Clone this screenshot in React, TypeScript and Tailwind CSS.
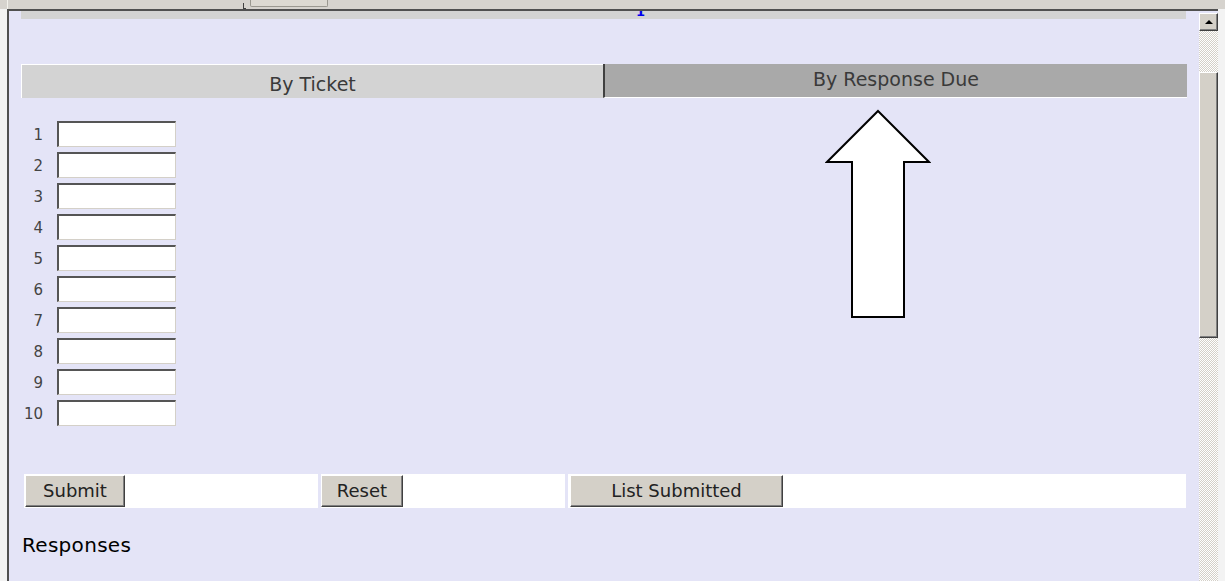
const rows = [1, 2, 3, 4, 5, 6, 7, 8, 9, 10];

function ClassicButton({ label, width }: { label: string; width: string }) {
  return (
    <button
      type="button"
      className={`${width} h-[32px] bg-[#d4d0c8] border border-t-white border-l-white border-r-[#404040] border-b-[#404040] shadow-[inset_-1px_-1px_0_#808080] text-[18px] leading-[22px] text-[#222] font-['DejaVu_Sans',sans-serif]`}
    >
      {label}
    </button>
  );
}

function UpArrowAnnotation() {
  return (
    <svg
      className="absolute left-[825px] top-[109px]"
      width="106"
      height="211"
      viewBox="0 0 106 211"
    >
      <polygon
        points="53,2 104,53 79,53 79,208 27,208 27,53 2,53"
        fill="#ffffff"
        stroke="#000000"
        strokeWidth="2"
        strokeLinejoin="miter"
      />
    </svg>
  );
}

function Scrollbar() {
  return (
    <div className="w-[19px] flex flex-col bg-[repeating-conic-gradient(#d4d0c8_0_25%,#ffffff_0_50%)] bg-[length:2px_2px]">
      <div className="h-[2px] bg-[#e4e4f7]" />
      <div className="h-[18px] bg-[#d4d0c8] border border-t-white border-l-white border-r-[#404040] border-b-[#404040] shadow-[inset_-1px_-1px_0_#808080] flex items-center justify-center">
        <div className="w-0 h-0 border-l-[4px] border-r-[4px] border-b-[4px] border-l-transparent border-r-transparent border-b-black" />
      </div>
      <div className="h-[41px]" />
      <div className="h-[266px] bg-[#d4d0c8] border border-t-white border-l-white border-r-[#404040] border-b-[#404040] shadow-[inset_-1px_-1px_0_#808080]" />
      <div className="flex-1" />
    </div>
  );
}

export default function App() {
  return (
    <div className="relative w-[1225px] h-[581px] overflow-hidden bg-[#f3f3f3] font-['DejaVu_Sans',sans-serif]">
      {/* browser toolbar strip */}
      <div className="h-[9px] bg-[#d6d3ce] flex">
        <div className="ml-[7px] w-px h-full bg-[#f2f1ec]" />
        <div className="ml-[235px] mt-[3px] w-[3px] h-[6px] border-l border-b border-[#404040]" />
        <div className="ml-[4px] w-[78px] h-[7px] border-l border-r border-b border-[#9a9890] rounded-b-[2px] bg-[#dcd9d2]" />
      </div>

      {/* framed page */}
      <div className="ml-[7px] w-[1211px] h-[572px] border-t-2 border-l-2 border-[#505050] flex">
        <div className="flex-1 bg-[#e4e4f7] flex flex-col">
          {/* pager strip */}
          <div className="ml-[12px] w-[1165px] h-[8px] bg-[#d3d3d3] overflow-hidden">
            <div className="ml-[615px] -mt-[7px] text-[13px] leading-[15px] font-bold text-[#0000ee]">1</div>
          </div>

          {/* view tabs */}
          <div className="mt-[45px] ml-[12px] w-[1166px] h-[34px] flex">
            <div className="w-[582px] bg-[#d3d3d3] border-t border-l border-white text-center pt-[8px] text-[19px] leading-[22px] text-[#3a3a3a]">
              By Ticket
            </div>
            <div className="flex-1 bg-[#a9a9a9] border-l-2 border-l-[#404040] border-b border-b-white text-center pt-[4px] text-[19px] leading-[22px] text-[#3a3a3a]">
              By Response Due
            </div>
          </div>

          {/* ticket number entries */}
          <div className="mt-[23px] flex flex-col gap-[5px]">
            {rows.map((n) => (
              <div key={n} className="flex items-center h-[26px]">
                <span className="w-[34px] text-right text-[15px] leading-[18px] text-[#444] pt-[2px]">{n}</span>
                <input
                  type="text"
                  className="ml-[14px] w-[119px] h-[26px] bg-white border-t-2 border-l-2 border-t-[#555] border-l-[#555] border-b border-r border-b-[#d4d0c8] border-r-[#d4d0c8] outline-none"
                />
              </div>
            ))}
          </div>

          {/* form actions */}
          <div className="mt-[48px] ml-[15px] flex gap-[3px] h-[34px]">
            <div className="w-[294px] bg-white pl-px pt-px">
              <ClassicButton label="Submit" width="w-[100px]" />
            </div>
            <div className="w-[244px] bg-white pt-px">
              <ClassicButton label="Reset" width="w-[82px]" />
            </div>
            <div className="w-[618px] bg-white pl-[2px] pt-px">
              <ClassicButton label="List Submitted" width="w-[213px]" />
            </div>
          </div>

          <div className="mt-[25px] ml-[13px] text-[20px] leading-[24px] tracking-[0.3px] text-black">Responses</div>
        </div>
        <Scrollbar />
      </div>

      <UpArrowAnnotation />
    </div>
  );
}
